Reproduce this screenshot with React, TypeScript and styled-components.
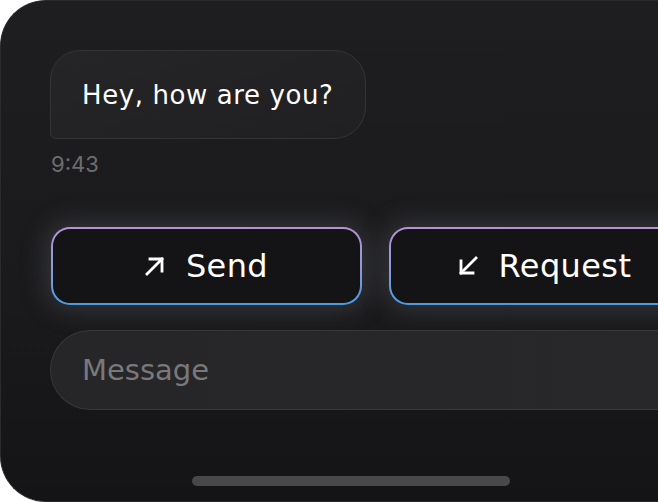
import React from "react";
import styled, { createGlobalStyle } from "styled-components";

const GlobalStyle = createGlobalStyle`
  html, body {
    margin: 0;
    background: #ffffff;
    overflow: hidden;
  }
  * {
    box-sizing: border-box;
  }
`;

const Panel = styled.div`
  width: 760px;
  height: 502px;
  border-radius: 46px 0 0 46px;
  border: 1px solid #2a2a2c;
  border-right: none;
  background: linear-gradient(180deg, #1e1e20 0%, #1a1a1c 60%, #141416 100%);
  padding: 49px 0 0 49px;
  display: flex;
  flex-direction: column;
  font-family: "DejaVu Sans", "Liberation Sans", sans-serif;
`;

const Bubble = styled.div`
  align-self: flex-start;
  height: 89px;
  padding: 0 32px 0 31px;
  display: flex;
  align-items: center;
  border-radius: 30px 32px 32px 6px;
  background: linear-gradient(160deg, #252527 0%, #202022 100%);
  border: 1px solid #343436;
  color: #ffffff;
  font-size: 26px;
  letter-spacing: 0.6px;
`;

const Time = styled.div`
  margin-top: 12px;
  margin-left: 1px;
  font-family: "Inter", "Liberation Sans", sans-serif;
  font-size: 22px;
  color: #6c6c6e;
`;

const ButtonRow = styled.div`
  display: flex;
  gap: 27px;
  margin-top: 50px;
  margin-left: 1px;
`;

const ActionButton = styled.button`
  flex: none;
  width: 311px;
  height: 78px;
  border-radius: 19px;
  border: 2px solid transparent;
  background:
    linear-gradient(#141416, #141416) padding-box,
    linear-gradient(180deg, #b892d4 0%, #8f9cd8 50%, #4a9be0 100%) border-box;
  box-shadow: 0 0 26px 5px rgba(105, 108, 120, 0.33);
  display: flex;
  align-items: center;
  justify-content: center;
  gap: 21px;
  color: #ffffff;
  font-family: inherit;
  font-size: 32px;
  letter-spacing: 0.4px;
  padding: 0;
`;

const Arrow = styled.svg`
  width: 20px;
  height: 20px;
  flex: none;
`;

const MessageField = styled.div`
  margin-top: 25px;
  height: 80px;
  border-radius: 40px 0 0 40px;
  background: linear-gradient(90deg, #262628 0%, #28282a 100%);
  border: 1px solid #38383a;
  border-right: none;
  display: flex;
  align-items: center;
  padding-left: 31px;
  color: #79797b;
  font-size: 29px;
`;

const HomeIndicator = styled.div`
  margin-top: 66px;
  margin-left: 142px;
  width: 318px;
  height: 10px;
  border-radius: 5px;
  background: #484849;
`;

export default function App() {
  return (
    <>
      <GlobalStyle />
      <Panel>
        <Bubble>Hey, how are you?</Bubble>
        <Time>9:43</Time>
        <ButtonRow>
          <ActionButton>
            <Arrow viewBox="0 0 20 20" fill="none" stroke="#fff" strokeWidth="2.8" strokeLinecap="square">
              <path d="M2 18 L17 3" />
              <path d="M5 3 H17 V15" />
            </Arrow>
            Send
          </ActionButton>
          <ActionButton>
            <Arrow viewBox="0 0 20 20" fill="none" stroke="#fff" strokeWidth="2.8" strokeLinecap="square">
              <path d="M18 2 L3 17" />
              <path d="M3 5 V17 H15" />
            </Arrow>
            Request
          </ActionButton>
        </ButtonRow>
        <MessageField>Message</MessageField>
        <HomeIndicator />
      </Panel>
    </>
  );
}
